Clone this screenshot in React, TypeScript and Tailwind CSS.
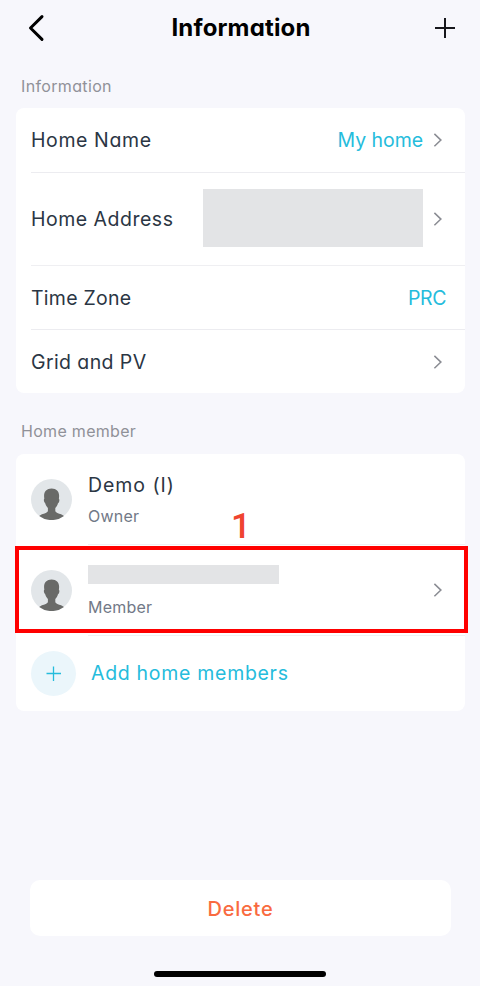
import React from "react";

function Chevron() {
  return (
    <svg className="block h-4 w-2.5 shrink-0" viewBox="0 0 10 16" fill="none" stroke="#8a8c93" strokeWidth="1.5">
      <path d="M1.4 1.9 L7.9 8.1 L1.4 14.3" />
    </svg>
  );
}

function Avatar() {
  return (
    <svg className="block h-[41px] w-[41px] shrink-0" viewBox="0 0 41 41">
      <circle cx="20.5" cy="20.5" r="20.5" fill="#e2e6e9" />
      <path
        fill="#696a68"
        d="M20.6 9.6C15.6 9.6 12.8 12.8 13.1 17.5L13.3 20.1C12.4 20.2 12.9 23.5 14.2 24.3C14.8 26.3 15.8 27.8 16.9 28.9V32.2C15.2 34.5 11 34.7 8.2 36.9A20.5 20.5 0 0 0 33 36.9C30.1 34.7 25.9 34.5 24.3 32.2V28.9C25.5 27.8 26.4 26.3 27 24.3C28.4 23.5 28.8 20.2 27.9 20.1L28.1 17.5C28.4 12.8 25.6 9.6 20.6 9.6Z"
      />
    </svg>
  );
}

export default function App() {
  return (
    <div className="flex h-[986px] w-[480px] flex-col overflow-hidden bg-[#f7f7fc] font-['Inter','Liberation_Sans',sans-serif] font-[385] text-[#2b3644] [font-feature-settings:'cv11']">
      <header className="flex h-14 shrink-0 items-center justify-between pr-6 pl-7">
        <svg className="block h-7 w-5" viewBox="0 0 20 28" fill="none" stroke="#000" strokeWidth="3" strokeLinecap="round" strokeLinejoin="round">
          <path d="M14 2.6 L2.5 14 L14 25.4" />
        </svg>
        <h1 className="text-[24px] leading-7 font-bold tracking-[0.15px] text-black">Information</h1>
        <svg className="block h-[22px] w-[22px]" viewBox="0 0 22 22" stroke="#17171c" strokeWidth="2">
          <path d="M1 11 H21 M11 1 V21" />
        </svg>
      </header>

      <h2 className="flex h-[52px] shrink-0 items-center pt-2 pl-[21px] text-base tracking-[0.35px] text-[#909198]">Information</h2>
      <section className="mr-[15px] ml-4 flex h-[285px] shrink-0 flex-col rounded-lg bg-white pl-[15px] text-[19.5px]">
        <div className="flex h-[65px] items-center border-b border-[#ececf0] pr-[22px]">
          <span className="pt-0.5 tracking-[0.6px]">Home Name</span>
          <span className="mr-[10px] ml-auto pt-0.5 tracking-[-0.05px] text-[#25bcdc]">My home</span>
          <Chevron />
        </div>
        <div className="flex h-[93px] items-center border-b border-[#efeff2] pr-[22px]">
          <span className="pt-px tracking-[0.5px]">Home Address</span>
          <span className="mr-[10px] mb-0.5 ml-auto h-[58px] w-[220px] bg-[#e3e4e6]" />
          <Chevron />
        </div>
        <div className="flex h-[64px] items-center justify-between border-b border-[#ececf0] pt-0.5 pr-[19px]">
          <span className="tracking-[0.25px]">Time Zone</span>
          <span className="tracking-[-0.4px] text-[#25bcdc]">PRC</span>
        </div>
        <div className="flex h-[63px] items-center justify-between pr-[22px]">
          <span className="pt-0.5 tracking-[0.4px]">Grid and PV</span>
          <Chevron />
        </div>
      </section>

      <h2 className="flex h-[61px] shrink-0 items-center pt-3.5 pl-[21px] text-base tracking-[0.3px] text-[#909198]">Home member</h2>
      <section className="relative mr-[15px] ml-4 flex h-[257px] shrink-0 flex-col rounded-lg bg-white pl-[15px]">
        <div className="flex h-[91px] items-center">
          <Avatar />
          <div className="ml-4 flex h-full grow flex-col border-b border-[#f0f0f3] pt-[17px]">
            <span className="text-[19.5px] leading-7 tracking-[0.95px]">Demo (I)</span>
            <span className="mt-[5px] text-base leading-6 tracking-[0.25px] text-[#727987]">Owner</span>
          </div>
        </div>
        <div className="flex h-[91px] items-center">
          <Avatar />
          <div className="ml-4 flex h-full grow items-center border-b border-[#f0f0f3] pr-[22px]">
            <div className="flex h-full grow flex-col pt-5">
              <span className="h-[19px] w-[191px] bg-[#e3e4e6]" />
              <span className="mt-[11px] text-base leading-6 tracking-[0.2px] text-[#727987]">Member</span>
            </div>
            <Chevron />
          </div>
        </div>
        <div className="flex h-[75px] items-center text-[#25bcdc]">
          <span className="flex h-[45px] w-[45px] items-center justify-center rounded-full bg-[#ebf6fb]">
            <svg className="block h-4 w-4" viewBox="0 0 16 16" stroke="#25bcdc" strokeWidth="1.3">
              <path d="M.5 7.5 H15 M7.5 .5 V15" />
            </svg>
          </span>
          <span className="ml-[15px] pt-px text-[19.5px] tracking-[0.7px]">Add home members</span>
        </div>
        <span className="absolute top-[61px] left-[215px] font-['Roboto',sans-serif] text-[35px] leading-[24px] font-medium text-[#ef4430]">1</span>
        <div className="absolute top-[92px] -left-[1.5px] h-[87px] w-[453px] border-4 border-[#ff0000]" />
      </section>

      <button className="mt-[169px] ml-[30px] flex h-[56px] w-[421px] shrink-0 items-center justify-center rounded-[10px] bg-white pt-0.5 text-[20px] font-medium tracking-[0.8px] text-[#f96a40]">
        Delete
      </button>
      <div className="mt-[35px] ml-[154px] h-1.5 w-[172px] shrink-0 rounded-full bg-black" />
    </div>
  );
}
